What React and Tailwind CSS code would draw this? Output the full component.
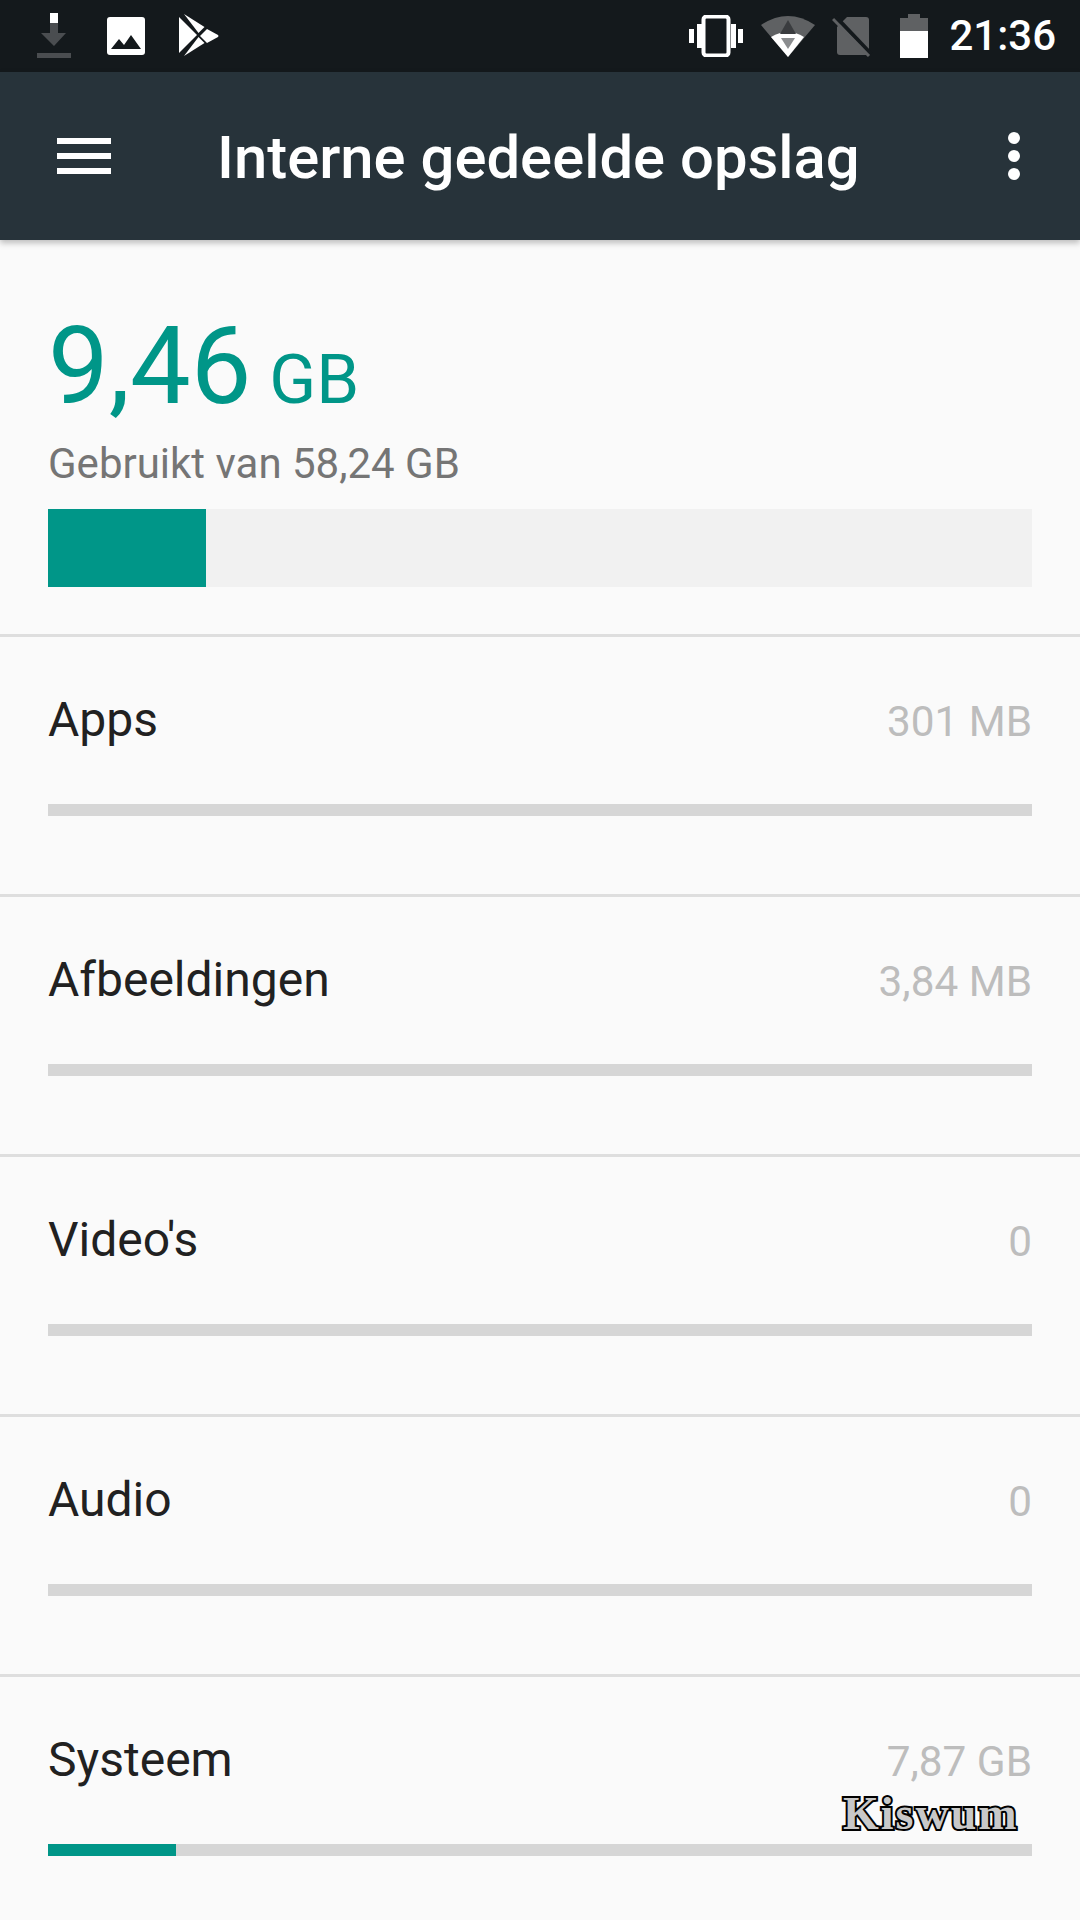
import React from "react";

const rows = [
  { name: "Apps", size: "301 MB", used: 0 },
  { name: "Afbeeldingen", size: "3,84 MB", used: 0 },
  { name: "Video's", size: "0", used: 0 },
  { name: "Audio", size: "0", used: 0 },
  { name: "Systeem", size: "7,87 GB", used: 128 },
];

const StatusLeft = () => (
  <div className="flex items-center">
    {/* download */}
    <svg width="34" height="46" viewBox="0 0 34 46" className="ml-[37px]">
      <rect x="13" y="0" width="8" height="10" fill="#ffffff" />
      <path d="M13 10h8v10h8L17 33 4 20h9z" fill="#4a4d50" />
      <rect x="0" y="40" width="34" height="5" fill="#4a4d50" />
    </svg>
    {/* image */}
    <svg width="38" height="38" viewBox="0 0 38 38" className="ml-[36px]">
      <rect width="38" height="38" rx="3" fill="#ffffff" />
      <path d="M4 32l8-10 5 6 7-10 10 14z" fill="#14191c" />
    </svg>
    {/* play store */}
    <svg width="40" height="44" viewBox="0 0 40 44" className="ml-[34px]">
      <path d="M0 3v36l18-18z" fill="#ffffff" />
      <path d="M5 0l14.500 19 6-6z" fill="#ffffff" />
      <path d="M5 42l14.500-19 6 6z" fill="#ffffff" />
      <path d="M28 15l11 6q1 1 0 2l-11 6-7-7z" fill="#ffffff" />
    </svg>
  </div>
);

const StatusRight = () => (
  <div className="flex items-center mr-[24px]">
    {/* vibrate */}
    <svg width="54" height="42" viewBox="0 0 54 42">
      <rect x="14.500" y="1.500" width="25" height="39" rx="3" fill="none" stroke="#ffffff" strokeWidth="4" />
      <rect x="0" y="14" width="5" height="14" fill="#ffffff" />
      <rect x="8" y="9" width="5" height="24" fill="#ffffff" />
      <rect x="42" y="9" width="5" height="24" fill="#ffffff" />
      <rect x="49" y="14" width="5" height="14" fill="#ffffff" />
    </svg>
    {/* wifi */}
    <svg width="54" height="44" viewBox="0 0 54 44" className="ml-[18px]">
      <path d="M0 11Q27 -7 54 11L27 43z" fill="#5f6163" />
      <path d="M10 23Q27 13 43 23L27 43z" fill="#ffffff" />
      <path d="M27 6l8 14h-16z" fill="#3a3c3f" />
      <path d="M20 24h14l-7 11z" fill="#8b8d8f" />
    </svg>
    {/* no sim */}
    <svg width="42" height="42" viewBox="0 0 42 42" className="ml-[17px]">
      <path d="M15 2h19a3 3 0 0 1 3 3v35H8a3 3 0 0 1-3-3V12z" fill="#5f6163" />
      <path d="M3 1l36 38" stroke="#14191c" strokeWidth="4" />
      <path d="M1 4l36 37" stroke="#5f6163" strokeWidth="3" />
    </svg>
    {/* battery */}
    <svg width="28" height="44" viewBox="0 0 28 44" className="ml-[26px]">
      <path d="M8 0h12v4h8v13H0V4h8z" fill="#5f6163" />
      <rect y="17" width="28" height="27" fill="#ffffff" />
    </svg>
    <span className="ml-[21px] font-['Roboto',sans-serif] text-[42px] font-medium leading-none text-white">21:36</span>
  </div>
);

const App = () => {
  return (
    <div className="relative w-[1080px] h-[1920px] overflow-hidden bg-[#fafafa] font-['Roboto',sans-serif]">
      <div className="flex h-[72px] items-center justify-between bg-[#14191c]">
        <StatusLeft />
        <StatusRight />
      </div>

      <header className="flex h-[168px] items-center bg-[#27333a] shadow-[0_3px_6px_rgba(0,0,0,0.25)] relative">
        <div className="ml-[57px] flex w-[54px] flex-col gap-[9px]">
          <div className="h-[6px] bg-white" />
          <div className="h-[6px] bg-white" />
          <div className="h-[6px] bg-white" />
        </div>
        <h1 className="ml-[106px] pt-[6px] text-[59.8px] font-medium leading-none text-white">Interne gedeelde opslag</h1>
        <div className="ml-auto mr-[60px] flex flex-col gap-[6px]">
          <div className="h-[12px] w-[12px] rounded-full bg-white" />
          <div className="h-[12px] w-[12px] rounded-full bg-white" />
          <div className="h-[12px] w-[12px] rounded-full bg-white" />
        </div>
      </header>

      <section className="h-[397px] px-[48px] pt-[81px] border-b-[3px] border-[#dedede]">
        <div className="flex items-baseline text-[#009688] leading-none">
          <span className="text-[108px] leading-[90px]">9,46</span>
          <span className="ml-[18px] text-[69px] leading-[90px]">GB</span>
        </div>
        <p className="mt-[15px] text-[42px] leading-[48px] text-[#757575]">Gebruikt van 58,24 GB</p>
        <div className="mt-[21px] h-[78px] bg-[#f1f1f1]">
          <div className="h-full w-[158px] bg-[#009688]" />
        </div>
      </section>

      {rows.map((row) => (
        <div key={row.name} className="h-[260px] px-[48px] pt-[56px] border-b-[3px] border-[#dedede] last:border-b-0">
          <div className="flex items-center justify-between h-[54px]">
            <span className="text-[48px] leading-none text-[#212121]">{row.name}</span>
            <span className="pt-[4px] text-[42.3px] leading-none text-[#bdbdbd]">{row.size}</span>
          </div>
          <div className="mt-[57px] h-[12px] bg-[#d6d6d6]">
            {row.used > 0 && <div className="h-full bg-[#009688]" style={{ width: row.used }} />}
          </div>
        </div>
      ))}

      {/* watermark */}
      <span className="absolute left-[843px] top-[1791px] font-['Liberation_Serif',serif] text-[46px] font-bold leading-none tracking-[2px] text-[#c8c8c8] [-webkit-text-stroke:4px_#000000] [paint-order:stroke_fill]">
        Kiswum
      </span>
    </div>
  );
};

export default App;
